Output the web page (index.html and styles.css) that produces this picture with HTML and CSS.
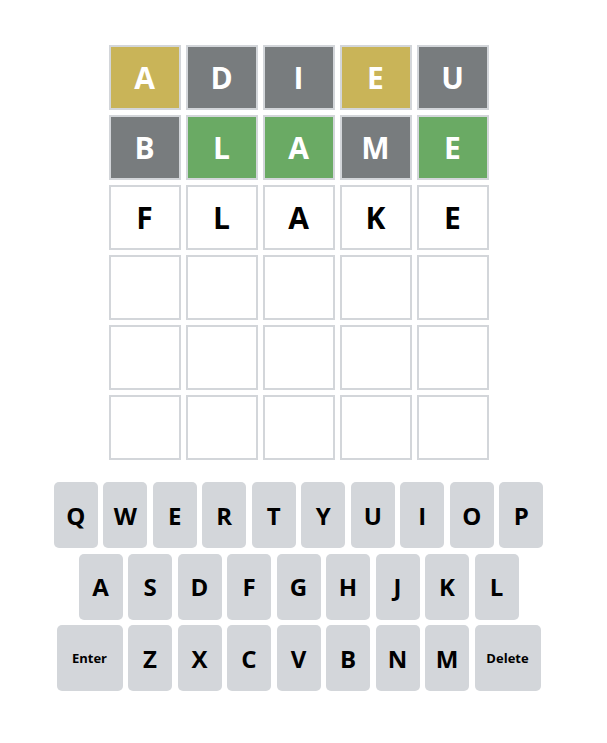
FILE: index.html
```html
<!DOCTYPE html>
<html>
<head>
<meta charset="utf-8">
<link rel="stylesheet" href="styles.css">
</head>
<body>
<div class="app">
  <div class="board">
    <div class="tile present">A</div><div class="tile absent">D</div><div class="tile absent">I</div><div class="tile present">E</div><div class="tile absent">U</div>
    <div class="tile absent">B</div><div class="tile correct">L</div><div class="tile correct">A</div><div class="tile absent">M</div><div class="tile correct">E</div>
    <div class="tile">F</div><div class="tile">L</div><div class="tile">A</div><div class="tile">K</div><div class="tile">E</div>
    <div class="tile"></div><div class="tile"></div><div class="tile"></div><div class="tile"></div><div class="tile"></div>
    <div class="tile"></div><div class="tile"></div><div class="tile"></div><div class="tile"></div><div class="tile"></div>
    <div class="tile"></div><div class="tile"></div><div class="tile"></div><div class="tile"></div><div class="tile"></div>
  </div>
  <div class="keyboard">
    <div class="krow">
      <button class="key">Q</button><button class="key">W</button><button class="key">E</button><button class="key">R</button><button class="key">T</button><button class="key">Y</button><button class="key">U</button><button class="key">I</button><button class="key">O</button><button class="key">P</button>
    </div>
    <div class="krow">
      <button class="key">A</button><button class="key">S</button><button class="key">D</button><button class="key">F</button><button class="key">G</button><button class="key">H</button><button class="key">J</button><button class="key">K</button><button class="key">L</button>
    </div>
    <div class="krow">
      <button class="key wide">Enter</button><button class="key">Z</button><button class="key">X</button><button class="key">C</button><button class="key">V</button><button class="key">B</button><button class="key">N</button><button class="key">M</button><button class="key wide">Delete</button>
    </div>
  </div>
</div>
</body>
</html>
```
FILE: styles.css
```css
html, body {
  margin: 0;
  padding: 0;
  background: #ffffff;
}
body {
  font-family: "Open Sans", "Liberation Sans", sans-serif;
}
.app {
  width: 597px;
  display: flex;
  flex-direction: column;
  align-items: center;
  padding-top: 45px;
}
.board {
  display: grid;
  grid-template-columns: repeat(5, 72px);
  grid-auto-rows: 65px;
  column-gap: 5px;
  row-gap: 5px;
}
.tile {
  box-sizing: border-box;
  border: 2px solid #d3d6da;
  display: flex;
  align-items: center;
  justify-content: center;
  font-size: 30px;
  font-weight: 700;
  color: #000;
  line-height: 1;
}
.tile.present { background: #c9b458; color: #fff; }
.tile.absent { background: #787c7e; color: #fff; }
.tile.correct { background: #6aaa64; color: #fff; }
.keyboard {
  margin-top: 22px;
  display: flex;
  flex-direction: column;
  align-items: center;
  gap: 5.5px;
}
.krow {
  display: flex;
  gap: 5.5px;
}
.key {
  box-sizing: border-box;
  width: 44px;
  height: 66px;
  border: none;
  border-radius: 5px;
  background: #d3d6da;
  color: #000;
  font-family: "Open Sans", "Liberation Sans", sans-serif;
  font-size: 24px;
  font-weight: 700;
  padding: 0;
  display: flex;
  align-items: center;
  justify-content: center;
}
.key.wide {
  width: 66px;
  font-size: 13px;
}
```
